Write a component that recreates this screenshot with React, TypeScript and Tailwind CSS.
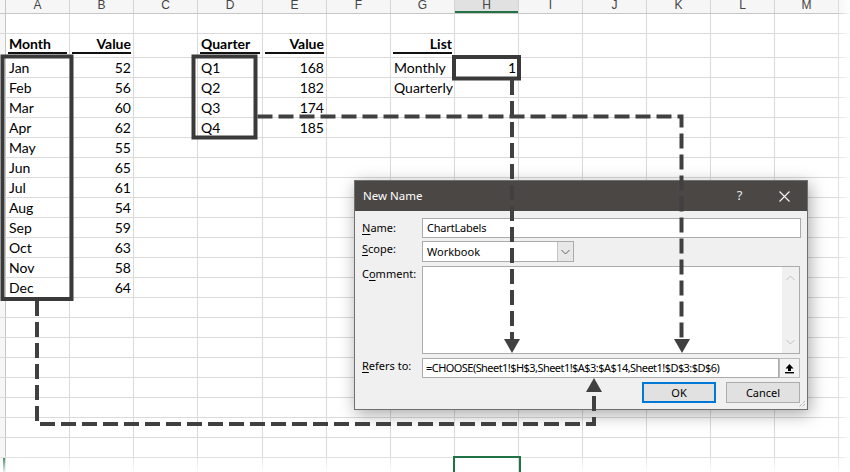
import React from 'react'

type Cell = { t: string; b?: boolean; r?: boolean; u?: boolean }

const months = ['Jan', 'Feb', 'Mar', 'Apr', 'May', 'Jun', 'Jul', 'Aug', 'Sep', 'Oct', 'Nov', 'Dec']
const monthValues = [52, 56, 60, 62, 55, 65, 61, 54, 59, 63, 58, 64]
const quarterValues = [168, 182, 174, 185]

const cells: Record<string, Cell> = {
  A2: { t: 'Month', b: true, u: true },
  B2: { t: 'Value', b: true, r: true, u: true },
  D2: { t: 'Quarter', b: true, u: true },
  E2: { t: 'Value', b: true, r: true, u: true },
  G2: { t: 'List', b: true, r: true, u: true },
  G3: { t: 'Monthly' },
  G4: { t: 'Quarterly' },
  H3: { t: '1', r: true },
}
months.forEach((m, i) => {
  cells[`A${i + 3}`] = { t: m }
  cells[`B${i + 3}`] = { t: String(monthValues[i]), r: true }
})
quarterValues.forEach((v, i) => {
  cells[`D${i + 3}`] = { t: `Q${i + 1}` }
  cells[`E${i + 3}`] = { t: String(v), r: true }
})

const cols = [
  { k: 'A', w: 'w-[64px]' },
  { k: 'B', w: 'w-[64px]' },
  { k: 'C', w: 'w-[64px]' },
  { k: 'D', w: 'w-[65px]' },
  { k: 'E', w: 'w-[64px]' },
  { k: 'F', w: 'w-[64px]' },
  { k: 'G', w: 'w-[64px]' },
  { k: 'H', w: 'w-[64px]' },
  { k: 'I', w: 'w-[64px]' },
  { k: 'J', w: 'w-[64px]' },
  { k: 'K', w: 'w-[64px]' },
  { k: 'L', w: 'w-[64px]' },
  { k: 'M', w: 'w-[64px]' },
  { k: 'N', w: 'w-[64px]' },
]

const rows = Array.from({ length: 23 }, (_, i) => i + 1)

function SheetCell({ id, w }: { id: string; w: string }) {
  const c = cells[id]
  const selected = id === 'H23'
  const base = `${w} shrink-0 border-r border-[#dadada] ${selected ? 'relative z-[1] outline-2 outline-[#217346]' : ''}`
  if (!c) return <div className={base} />
  if (c.u) {
    return (
      <div className={`${base} flex flex-col`}>
        <div className={`h-[18px] leading-[20px] whitespace-nowrap ${c.r ? 'text-right pr-[2px]' : 'pl-[3px]'} ${c.b ? 'font-bold' : ''}`}>
          {c.t}
        </div>
        <div className="mx-[2px] h-[2px] bg-[#111]" />
      </div>
    )
  }
  return (
    <div className={`${base} h-[19px] leading-[20px] whitespace-nowrap ${c.r ? 'text-right pr-[2px]' : 'pl-[3px]'}`}>
      {c.t}
    </div>
  )
}

function Sheet() {
  return (
    <div className="flex flex-col text-[14px] text-black" style={{ fontFamily: 'Lato, "Noto Sans", sans-serif' }}>
      <div className="flex h-[14px] border-b border-[#c6c6c6] bg-[#f6f6f6]">
        <div className="w-[6px] shrink-0 border-r border-[#c6c6c6]" />
        {cols.map(c => (
          <div
            key={c.k}
            className={`${c.w} shrink-0 border-r border-[#d4d4d4] text-center text-[12px] leading-[10px] text-[#444] ${c.k === 'H' ? 'bg-[#e1e1e1] shadow-[inset_0_-2px_0_#217346]' : ''}`}
            style={{ fontFamily: '"Liberation Sans", Arial, sans-serif' }}
          >
            {c.k}
          </div>
        ))}
      </div>
      {rows.map(r => (
        <div key={r} className={`flex border-b border-[#dadada] ${r === 2 ? 'h-[24px]' : 'h-[20px]'}`}>
          <div className={`w-[6px] shrink-0 border-r border-[#c6c6c6] bg-[#f6f6f6] ${r === 23 ? 'shadow-[inset_-2px_0_0_#217346]' : ''}`} />
          {cols.map(c => (
            <SheetCell key={c.k} id={`${c.k}${r}`} w={c.w} />
          ))}
        </div>
      ))}
    </div>
  )
}

function Chevron({ up }: { up?: boolean }) {
  return (
    <svg width="9" height="6" viewBox="0 0 9 6">
      <polyline
        points={up ? '0.5,5 4.5,1 8.5,5' : '0.5,1 4.5,5 8.5,1'}
        fill="none"
        stroke="currentColor"
        strokeWidth="1"
      />
    </svg>
  )
}

function NewNameDialog() {
  return (
    <div
      className="absolute left-[354px] top-[180px] w-[454px] h-[230px] flex flex-col bg-[#f0f0f0] border border-[#707070] shadow-[2px_4px_16px_rgba(0,0,0,0.35)] text-[11px] text-black"
      style={{ fontFamily: '"Noto Sans", "Open Sans", sans-serif' }}
    >
      <div className="h-[30px] shrink-0 flex items-center bg-[#4a4745] text-white">
        <span className="pl-[8px] text-[11.5px]">New Name</span>
        <div className="ml-auto w-[45px] text-center text-[13px] text-[#e8e8e8]">?</div>
        <div className="w-[45px] flex justify-center">
          <svg width="11" height="11" viewBox="0 0 11 11">
            <path d="M0.5 0.5 L10.5 10.5 M10.5 0.5 L0.5 10.5" stroke="#f2f2f2" strokeWidth="1.2" />
          </svg>
        </div>
      </div>

      <div className="flex flex-col pl-[7px] pr-[6px] pt-[7px]">
        <div className="flex">
          <label className="w-[60px] pt-[2px] leading-[16px]">
            <span className="underline underline-offset-2">N</span>ame:
          </label>
          <div className="flex-1 h-[20px] bg-white border border-[#ababab] px-[4px] leading-[18px] tracking-[-0.2px]">ChartLabels</div>
        </div>

        <div className="flex mt-[3px]">
          <label className="w-[60px] leading-[16px]">
            <span className="underline underline-offset-2">S</span>cope:
          </label>
          <div className="w-[152px] h-[21px] flex bg-white border border-[#ababab]">
            <div className="flex-1 px-[4px] leading-[19px]">Workbook</div>
            <div className="w-[16px] flex items-center justify-center bg-[#e8e8e8] border-l border-[#c4c4c4] text-[#606060]">
              <Chevron />
            </div>
          </div>
        </div>

        <div className="flex mt-[4px] mr-[1px]">
          <label className="w-[60px] leading-[16px]">
            C<span className="underline underline-offset-2">o</span>mment:
          </label>
          <div className="flex-1 h-[88px] flex bg-white border border-[#ababab]">
            <div className="flex-1" />
            <div className="w-[17px] flex flex-col items-center justify-between py-[8px] bg-[#f0f0f0] text-[#c2c2c2]">
              <Chevron up />
              <Chevron />
            </div>
          </div>
        </div>

        <div className="flex mt-[4px] mr-[1px]">
          <label className="w-[60px] leading-[16px]">
            <span className="underline underline-offset-2">R</span>efers to:
          </label>
          <div className="flex-1 h-[20px] bg-white border border-[#ababab] px-[3px] leading-[18px] tracking-[-0.55px] whitespace-nowrap overflow-hidden">
            =CHOOSE(Sheet1!$H$3,Sheet1!$A$3:$A$14,Sheet1!$D$3:$D$6)
          </div>
          <div className="w-[21px] h-[20px] flex items-center justify-center bg-[#f3f3f3] border border-[#bcbcbc]">
            <svg width="11" height="11" viewBox="0 0 11 11">
              <path d="M5.5 1 L9.5 5.5 L7 5.5 L7 8 L4 8 L4 5.5 L1.5 5.5 Z" fill="#000" />
              <rect x="1" y="9" width="9" height="1.4" fill="#000" />
            </svg>
          </div>
        </div>

        <div className="flex justify-end gap-[10px] mt-[4px] mr-[1px]">
          <button className="w-[74px] h-[21px] border-2 border-[#0078d7] bg-[#e1e1e1] leading-[17px]">OK</button>
          <button className="w-[74px] h-[21px] border border-[#adadad] bg-[#e1e1e1] leading-[19px]">Cancel</button>
        </div>
      </div>

      <svg className="absolute right-[1px] bottom-[1px]" width="10" height="10" viewBox="0 0 10 10">
        <path d="M9 3 L3 9 M9 6 L6 9" stroke="#9a9a9a" strokeWidth="1" strokeDasharray="1 1" />
      </svg>
    </div>
  )
}

function Annotations() {
  const ink = '#404040'
  return (
    <svg className="absolute left-0 top-0 pointer-events-none" width="850" height="472" viewBox="0 0 850 472">
      <rect x="2.5" y="56.5" width="69" height="242.5" fill="none" stroke="#3a3a3a" strokeWidth="4" />
      <rect x="193.5" y="56.5" width="62" height="81" fill="none" stroke="#3a3a3a" strokeWidth="4" />
      <rect x="454" y="57" width="65" height="21.5" fill="none" stroke="#3a3a3a" strokeWidth="4" />

      <path d="M512 80 V339" fill="none" stroke={ink} strokeWidth="4" strokeDasharray="15 6" />
      <path d="M257.5 116.5 H681.5 V339" fill="none" stroke={ink} strokeWidth="4" strokeDasharray="15 6" />
      <path d="M37 301 V424 H594 V392" fill="none" stroke={ink} strokeWidth="4" strokeDasharray="15 6" />

      <polygon points="504,339 520,339 512,353" fill={ink} />
      <polygon points="674,339 690,339 682,353" fill={ink} />
      <polygon points="586,392 602,392 594,378" fill={ink} />
    </svg>
  )
}

export default function App() {
  return (
    <div className="relative w-[850px] h-[472px] overflow-hidden bg-white">
      <Sheet />
      <NewNameDialog />
      <Annotations />
      <div className="absolute left-0 right-0 bottom-0 h-[18px] bg-linear-to-b from-white/0 to-white/90" />
      <div className="absolute top-0 bottom-0 right-0 w-[14px] bg-linear-to-r from-white/0 to-white/90" />
    </div>
  )
}
